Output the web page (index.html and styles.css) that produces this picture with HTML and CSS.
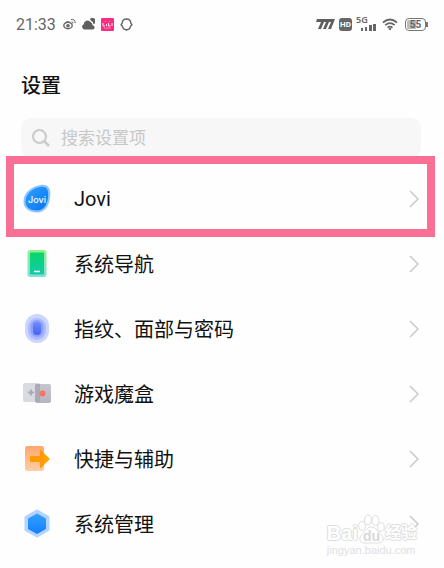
FILE: index.html
```html
<!DOCTYPE html>
<html lang="zh-CN">
<head>
    <meta charset="UTF-8">
    <meta name="viewport" content="width=device-width, initial-scale=1">
    <title>设置</title>
    <link rel="stylesheet" href="styles.css">
</head>
<body>
    <div class="status-bar">
        <div class="status-left">
            <span class="clock">21:33</span>
            <svg class="status-icon" width="13" height="12" viewBox="0 0 13 12">
                <ellipse cx="5" cy="7.5" rx="4.2" ry="3.2" fill="none" stroke="#666" stroke-width="1.4"/>
                <circle cx="5" cy="7.7" r="1.8" fill="#666"/>
                <path d="M2 5.5Q4 2.5 6 4M8.5 3.8q1.7-.2 1.4 1.7M8 1.5q4-.8 4.2 3.6" fill="none" stroke="#666" stroke-width="1"/>
            </svg>
            <svg class="status-icon" width="13" height="12" viewBox="0 0 13 12">
                <path d="M2.8 11.5a2.7 2.7 0 0 1-1-5.2 3.800 3.800 0 0 1 6.800-2.300 4.500 4.500 0 0 1 2 3.200q2.300.700 2 2.400 0 1.900-2 1.900z" fill="#5f5f5f"/>
                <path d="M8 1a3 3 0 0 1 4.800 4.500l-1.200.8a5 5 0 0 0-2.800-3.800z" fill="#5f5f5f"/>
            </svg>
            <svg class="status-icon" width="13" height="13" viewBox="0 0 13 13">
                <rect width="13" height="13" rx="1" fill="#fa2d84"/>
                <path d="M2 5v3h2M5.500 8V6M7.500 5v3h2M11 8V5" fill="none" stroke="#ffe3ee" stroke-width="1"/>
                <path d="M3 10h7M4 3.500h1M8 3.500h1" fill="none" stroke="#fd7fb3" stroke-width="1"/>
            </svg>
            <svg class="status-icon" width="13" height="13" viewBox="0 0 13 13">
                <path d="M6.500 1a4.300 4.300 0 0 1 4.300 4L12 6.800l-1.300 1.300-1.200 2.700-3 1.200-3-1.200-1.200-2.700L1 6.800 2.200 5a4.300 4.300 0 0 1 4.300-4z" fill="none" stroke="#666" stroke-width="1.400" stroke-linejoin="round"/>
            </svg>
        </div>
        <div class="status-right">
            <svg width="19" height="10" viewBox="0 0 19 10">
                <path d="M1 0h18l-4 10h-3l3-7h-2l-3 7H7l3-7H8l-3 7H2l3-7H0z" fill="#5f5f5f"/>
            </svg>
            <span class="hd">HD</span>
            <span class="signal">
                <span class="network">5G</span>
                <svg width="15" height="8" viewBox="0 0 15 8">
                    <path d="M0 5h2v3H0zM4 4h2v4H4zM8 2h3v6H8zM12 1h3v7h-3z" fill="#666"/>
                </svg>
            </span>
            <svg width="16" height="13" viewBox="0 0 16 13">
                <path d="M1 4.500Q8-1.500 15 4.500M3.300 7.200Q8 3.200 12.700 7.200M5.500 9.700Q8 7.700 10.500 9.700" fill="none" stroke="#666" stroke-width="1.700"/>
                <path d="M6.300 10.800Q8 9.400 9.700 10.800L8 12.500z" fill="#666"/>
            </svg>
            <span class="battery">55</span>
        </div>
    </div>

    <main class="settings">
        <h1>设置</h1>
        <label class="search">
            <svg width="20" height="20" viewBox="0 0 20 20">
                <circle cx="8.500" cy="8.500" r="6.500" fill="none" stroke="#ccc" stroke-width="2.200"/>
                <path d="M13 13l5 5" stroke="#ccc" stroke-width="2.600"/>
            </svg>
            <input type="search" placeholder="搜索设置项" aria-label="搜索设置项">
        </label>

        <nav class="list">
            <a class="row highlight" href="#jovi">
                <svg class="icon" viewBox="0 0 30 30">
                    <defs>
                        <linearGradient id="jovi" x1="0" y1="0" x2="1" y2="1">
                            <stop offset="0" stop-color="#2ba2ff"/>
                            <stop offset="1" stop-color="#0874f4"/>
                        </linearGradient>
                    </defs>
                    <path d="M21 .800c5 0 7.500 3.500 7.300 9.700C28 20.500 24 28.500 15 28.500 7.500 28.500 1.500 24.500 1.500 17.500 1.500 9.500 8 4.500 13 2.500c3-1.200 5.500-1.700 8-1.700z" fill="#8fc5fc"/>
                    <path d="M20.500 2.800c4 0 5.800 2.700 5.700 7.700C26 19.500 22.500 26.500 15 26.500 8.500 26.500 3.500 23.500 3.500 17.500 3.500 10.500 9 6.200 13.500 4.300c2.500-1 4.700-1.500 7-1.500z" fill="url(#jovi)"/>
                    <text class="jovi-mark" x="15" y="19" text-anchor="middle">Jovi</text>
                </svg>
                <span class="name">Jovi</span>
                <svg class="arrow" viewBox="0 0 10 18"><path d="M1 1l8 8-8 8"/></svg>
            </a>
            <a class="row" href="#navigation">
                <svg class="icon" viewBox="0 0 30 30">
                    <defs>
                        <linearGradient id="phone" x1="0" y1="0" x2="0" y2="1">
                            <stop offset="0" stop-color="#08d66c"/>
                            <stop offset="1" stop-color="#12c9ae"/>
                        </linearGradient>
                        <linearGradient id="phone-edge" x1="0" y1="0" x2="0" y2="1">
                            <stop offset="0" stop-color="#93ee8c"/>
                            <stop offset="1" stop-color="#83dfd0"/>
                        </linearGradient>
                    </defs>
                    <rect x="5.500" y="1" width="19" height="27" rx="3" fill="url(#phone-edge)"/>
                    <rect x="8" y="3.500" width="14" height="22" rx="1" fill="url(#phone)"/>
                    <path d="M12 22.500h6" stroke="#fff" stroke-width="1.500"/>
                </svg>
                <span class="name">系统导航</span>
                <svg class="arrow" viewBox="0 0 10 18"><path d="M1 1l8 8-8 8"/></svg>
            </a>
            <a class="row" href="#security">
                <svg class="icon" viewBox="0 0 30 30">
                    <defs>
                        <linearGradient id="finger" x1="0" y1="0" x2="0" y2="1">
                            <stop offset="0" stop-color="#6b8cff"/>
                            <stop offset="1" stop-color="#4862ef"/>
                        </linearGradient>
                    </defs>
                    <rect x="3" y="0" width="24" height="29" rx="12" fill="#ccd5fd"/>
                    <rect x="6" y="4" width="18" height="22" rx="9" fill="#adbafd"/>
                    <rect x="8.500" y="6" width="13" height="17" rx="6.500" fill="#8c9ffa"/>
                    <rect x="11" y="8" width="8" height="13" rx="4" fill="url(#finger)"/>
                </svg>
                <span class="name">指纹、面部与密码</span>
                <svg class="arrow" viewBox="0 0 10 18"><path d="M1 1l8 8-8 8"/></svg>
            </a>
            <a class="row" href="#games">
                <svg class="icon" viewBox="0 0 30 30">
                    <defs>
                        <linearGradient id="pad" x1="0" y1="0" x2="0" y2="1">
                            <stop offset="0" stop-color="#c5c7d0"/>
                            <stop offset="1" stop-color="#b4b5c1"/>
                        </linearGradient>
                    </defs>
                    <rect x="1" y="4" width="17" height="19" rx="2" fill="#d9dbe1"/>
                    <rect x="13" y="5" width="16" height="19" rx="2" fill="url(#pad)"/>
                    <path d="M13 6.500Q13 5 14.500 5H18v18h-5z" fill="#a9abb7"/>
                    <path d="M6 13.500h6M9 10.500v6" stroke="#aaacb9" stroke-width="2"/>
                    <circle cx="20.500" cy="14.500" r="3" fill="#fb7163"/>
                </svg>
                <span class="name">游戏魔盒</span>
                <svg class="arrow" viewBox="0 0 10 18"><path d="M1 1l8 8-8 8"/></svg>
            </a>
            <a class="row" href="#shortcuts">
                <svg class="icon" viewBox="0 0 30 30">
                    <defs>
                        <linearGradient id="door" x1="0" y1="0" x2="0" y2="1">
                            <stop offset="0" stop-color="#ffa76e"/>
                            <stop offset="1" stop-color="#ffcda5"/>
                        </linearGradient>
                    </defs>
                    <rect x="3" y="2" width="19" height="25" rx="2" fill="url(#door)"/>
                    <path d="M9 12h9V6.500q0-1.200 1-.3l8.500 8.200q.700.600 0 1.200L19 23.800q-1 .900-1-.3V18H9q-1 0-1-1v-4q0-1 1-1z" fill="#ffa605"/>
                    <path d="M18 12V6.500q0-1.200 1-.3l3 2.900v11.800l-3 2.900q-1 .900-1-.3V18H9q-1 0-1-1v-4q0-1 1-1z" fill="#ff9b00"/>
                </svg>
                <span class="name">快捷与辅助</span>
                <svg class="arrow" viewBox="0 0 10 18"><path d="M1 1l8 8-8 8"/></svg>
            </a>
            <a class="row" href="#system">
                <svg class="icon" viewBox="0 0 30 30">
                    <defs>
                        <linearGradient id="hexagon" x1="0" y1="0" x2="0" y2="1">
                            <stop offset="0" stop-color="#34a0fe"/>
                            <stop offset="1" stop-color="#1480ff"/>
                        </linearGradient>
                    </defs>
                    <path d="M15 2l11 6.200v12.600L15 27 4 20.800V8.200z" fill="#b3d4fc" stroke="#b3d4fc" stroke-width="3" stroke-linejoin="round"/>
                    <path d="M15 5.500l8 4.500v9.500L15 24l-8-4.500V10z" fill="url(#hexagon)" stroke="url(#hexagon)" stroke-width="2" stroke-linejoin="round"/>
                </svg>
                <span class="name">系统管理</span>
                <svg class="arrow" viewBox="0 0 10 18"><path d="M1 1l8 8-8 8"/></svg>
            </a>
        </nav>
    </main>

    <div class="watermark">
        <div class="brand">
            <span>Bai</span>
            <svg width="27" height="30" viewBox="0 0 27 30">
                <g fill="#fff" stroke="#dedede" stroke-width="1">
                    <path d="M13.500 13c4 0 5 3 8 6 6 5 4 10-1 10h-14c-5 0-7-5-1-10 3-3 4-6 8-6z"/>
                    <ellipse cx="4" cy="12" rx="3.300" ry="4.300"/>
                    <ellipse cx="10" cy="6" rx="3.500" ry="5"/>
                    <ellipse cx="17.500" cy="6.500" rx="3.500" ry="5"/>
                    <ellipse cx="23" cy="13" rx="3.300" ry="4.300"/>
                </g>
                <text class="paw-text" x="13.500" y="27" text-anchor="middle">du</text>
            </svg>
            <span>经验</span>
        </div>
        <div class="site">jingyan.baidu.com</div>
    </div>
</body>
</html>
```
FILE: styles.css
```css
* {
    box-sizing: border-box;
}
body {
    position: relative;
    margin: 0;
    min-height: 100vh;
    overflow: hidden;
    background-color: #fefefe;
    color: #111;
    font-family: Roboto, "Noto Sans CJK SC", sans-serif;
}
.status-bar {
    display: flex;
    justify-content: space-between;
    align-items: center;
    height: 48px;
    padding: 0 18px 0 16px;
    color: #666;
}
.status-left {
    display: flex;
    align-items: center;
    gap: 6px;
}
.clock {
    margin-right: 1px;
    font-size: 16px;
}
.status-right {
    display: flex;
    align-items: center;
    gap: 4px;
}
.hd {
    width: 13px;
    border-radius: 3px;
    background-color: #666;
    color: #fff;
    font-size: 8px;
    font-weight: bold;
    line-height: 13px;
    text-align: center;
}
.signal {
    display: flex;
    flex-direction: column;
    align-items: flex-end;
    width: 20px;
    margin-right: 2px;
}
.network {
    align-self: flex-start;
    font-family: "Noto Sans", sans-serif;
    font-size: 9px;
    font-weight: 600;
    line-height: 6px;
}
.battery {
    position: relative;
    width: 21px;
    margin-left: 3px;
    border: 1px solid #777;
    border-radius: 4px;
    background: linear-gradient(to right, #bbb 55%, #fff 55%) content-box;
    padding: 1px;
    font-size: 10px;
    font-weight: bold;
    line-height: 9px;
    text-align: center;
}
.battery::after {
    content: "";
    position: absolute;
    top: 3px;
    right: -3px;
    width: 2px;
    height: 5px;
    background-color: #777;
}
.settings {
    padding: 22px 23px 0 21px;
}
h1 {
    margin: 0 0 16px;
    font-size: 20px;
    font-weight: 500;
    line-height: 32px;
}
.search {
    display: flex;
    align-items: center;
    gap: 10px;
    height: 40px;
    padding: 0 10px;
    border-radius: 10px;
    background-color: #f7f7f7;
}
.search input {
    flex: 1;
    min-width: 0;
    padding: 0;
    border: none;
    outline: none;
    background: none;
    font-family: inherit;
    font-size: 17px;
}
.search input::placeholder {
    color: #c8c8c8;
}
.list {
    margin-top: 8px;
}
.row {
    position: relative;
    display: flex;
    align-items: center;
    height: 65px;
    color: inherit;
    text-decoration: none;
}
/* frame drawn over the row and the end of the search box */
.highlight::after {
    content: "";
    position: absolute;
    inset: -10px -14px -6px -15px;
    border: 8px solid #f96f96;
}
.icon {
    width: 30px;
    height: 30px;
    margin-left: 1px;
}
.jovi-mark {
    fill: #fff;
    font-family: Inter, sans-serif;
    font-size: 9px;
    font-weight: 500;
}
.name {
    flex: 1;
    margin-left: 22px;
    font-size: 20px;
}
.arrow {
    width: 10px;
    height: 18px;
    margin-right: 2px;
    fill: none;
    stroke: #c8c8c8;
    stroke-width: 1.5;
}
.watermark {
    position: absolute;
    right: 27px;
    bottom: 11px;
    color: #fff;
    font-family: "Liberation Sans", "Noto Sans CJK SC", sans-serif;
    text-shadow: 1px 0 #dedede, -1px 0 #dedede, 0 1px #dedede, 0 -1px #dedede;
}
.brand {
    display: flex;
    align-items: flex-end;
    font-size: 20px;
    font-weight: bold;
    line-height: 22px;
}
.brand span:last-child {
    font-size: 16px;
}
.paw-text {
    fill: #d8d8d8;
    font-size: 14px;
    text-shadow: none;
}
.site {
    color: #e0e0e0;
    font-size: 11px;
    line-height: 13px;
    text-shadow: none;
}
```
